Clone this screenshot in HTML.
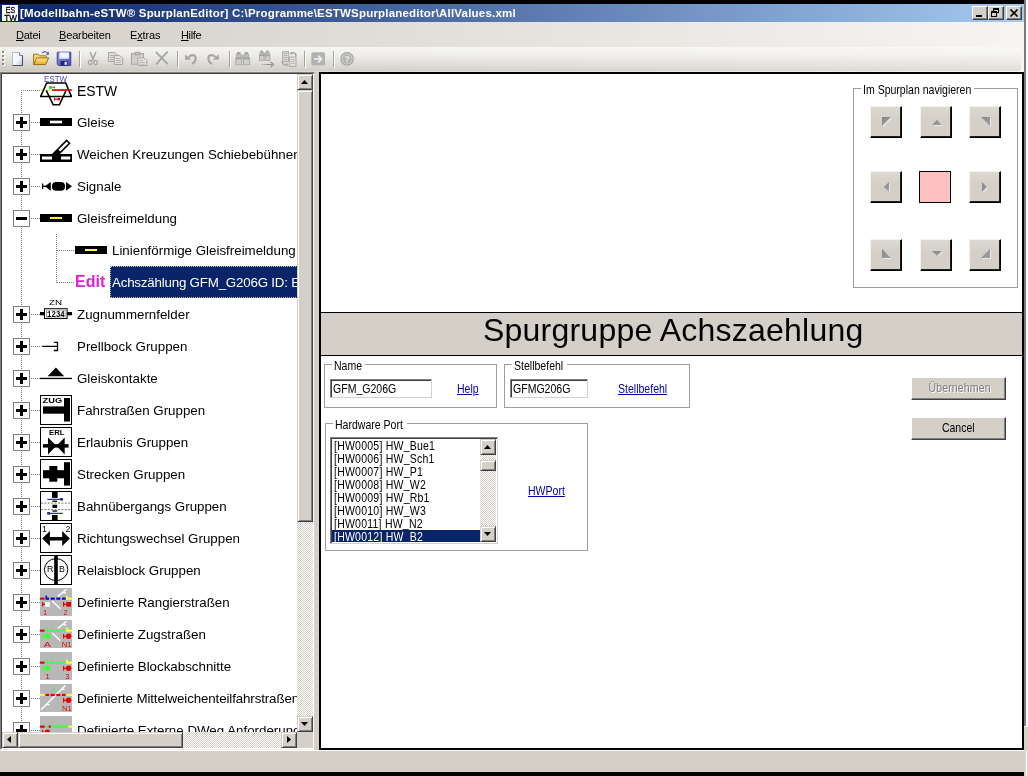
<!DOCTYPE html>
<html lang="de">
<head>
<meta charset="utf-8">
<title>[Modellbahn-eSTW® SpurplanEditor]</title>
<style>
html,body{margin:0;padding:0;}
body{width:1028px;height:776px;background:#000;overflow:hidden;position:relative;font-family:"Liberation Sans",sans-serif;font-size:11px;color:#000;}
.abs{position:absolute;}
#win{will-change:transform;position:absolute;left:0;top:4px;width:1024px;height:768px;background:#d4d0c8;overflow:hidden;}
#edgeR{position:absolute;left:1024px;top:0;width:2px;height:776px;background:#7b7b7b;}
#edgeR2{position:absolute;left:1026px;top:0;width:2px;height:776px;background:#fff;}
/* title bar */
#title{position:absolute;left:0;top:0;width:1024px;height:18px;background:linear-gradient(90deg,#0a246a 0%,#a6caf0 100%);}
#title .txt{position:absolute;left:20px;top:1px;font-weight:bold;font-size:11.5px;line-height:16px;color:#fff;white-space:pre;letter-spacing:0.2px;}
.cap{position:absolute;top:2px;width:16px;height:14px;background:#d4d0c8;box-sizing:border-box;border:1px solid;border-color:#fff #404040 #404040 #fff;box-shadow:inset -1px -1px 0 #808080;}
/* menu */
#menu{position:absolute;left:0;top:18px;width:1024px;height:25px;background:linear-gradient(90deg,#d4d0c8 0%,#f6f5f2 100%);}
#menu span{position:absolute;top:7px;line-height:13px;font-size:11px;white-space:pre;}
#menu u{text-decoration:underline;}
/* toolbar */
#tbwrap{position:absolute;left:0;top:43px;width:1024px;height:25px;background:linear-gradient(90deg,#d4d0c8 0%,#f6f5f2 100%);}
#tb{position:absolute;left:0;top:0;width:1021px;height:24px;border-radius:0 3px 3px 0;background:linear-gradient(180deg,rgba(255,255,255,.8) 0%,rgba(255,255,255,.62) 35%,rgba(255,255,255,.1) 90%,rgba(255,255,255,0) 100%),linear-gradient(90deg,#cbc7be 0%,#d4d1c9 40%,#e1ded7 100%);}
.sep{position:absolute;top:4px;width:1px;height:16px;background:#a5a299;box-shadow:1px 1px 0 #fff;}
.ico{position:absolute;top:46px;width:16px;height:16px;}
/* tree */
#tree{position:absolute;left:0;top:68px;width:315px;height:678px;box-sizing:border-box;border:1px solid;border-color:#808080 #d4d0c8 #f0eee9 #808080;background:#fff;}
#treein{position:absolute;left:0;top:0;width:313px;height:676px;box-sizing:border-box;border:1px solid;border-color:#404040 #fff #fff #404040;overflow:hidden;}
#tv{position:absolute;left:0;top:0;width:295px;height:658px;overflow:hidden;background:#fff;font-size:13.33px;}
.row{position:absolute;left:0;height:32px;width:600px;}
.row .t{position:absolute;top:1px;line-height:32px;white-space:pre;font-size:13.33px;}
.hl{position:absolute;height:1px;background-image:linear-gradient(90deg,#808080 50%,transparent 50%);background-size:2px 1px;}
.vl{position:absolute;width:1px;background-image:linear-gradient(180deg,#808080 50%,transparent 50%);background-size:1px 2px;}
.pm{position:absolute;left:12px;top:8px;width:17px;height:17px;box-sizing:border-box;border:1px solid #808080;background:#fff;}
.pm:before{content:"";position:absolute;left:2px;top:6px;width:11px;height:3px;background:#000;}
.pm.plus:after{content:"";position:absolute;left:6px;top:2px;width:3px;height:11px;background:#000;}
.ti{position:absolute;top:0;width:32px;height:32px;}
/* scrollbars */
.sbtrack{position:absolute;background-color:#fff;background-image:linear-gradient(45deg,#d4d0c8 25%,transparent 25%,transparent 75%,#d4d0c8 75%),linear-gradient(45deg,#d4d0c8 25%,transparent 25%,transparent 75%,#d4d0c8 75%);background-size:2px 2px;background-position:0 0,1px 1px;}
.sbb{position:absolute;box-sizing:border-box;background:#d4d0c8;border:1px solid;border-color:#d4d0c8 #404040 #404040 #d4d0c8;box-shadow:inset 1px 1px 0 #fff,inset -1px -1px 0 #808080;}
.arr{position:absolute;background:#000;}
.au{left:3px;top:5px;width:7px;height:4px;clip-path:polygon(0 100%,50% 0,100% 100%);}
.ad{left:3px;top:5px;width:7px;height:4px;clip-path:polygon(0 0,100% 0,50% 100%);}
.al{left:4px;top:3px;width:4px;height:7px;clip-path:polygon(100% 0,100% 100%,0 50%);}
.ar{left:5px;top:3px;width:4px;height:7px;clip-path:polygon(0 0,100% 50%,0 100%);}
/* right */
#right{position:absolute;left:319px;top:68px;width:705px;height:678px;box-sizing:border-box;border:2px solid #000;background:#fff;overflow:hidden;}
#banner{position:absolute;left:0;top:238px;width:701px;height:44px;box-sizing:border-box;border-top:1px solid #000;border-bottom:1px solid #000;background:#d4d0c8;}
#banner .t{position:absolute;left:162px;top:-1px;font-size:32px;line-height:36px;white-space:pre;letter-spacing:0.22px;}
.gb{position:absolute;box-sizing:border-box;border:1px solid #9d9d9d;}
.gb .lbl{position:absolute;top:-5px;background:#fff;padding:0 4px 0 2px;line-height:13px;height:10px;white-space:pre;}
.ms{display:inline-block;font-size:12.4px;transform:scaleX(.85);transform-origin:0 50%;white-space:pre;}
.inp{position:absolute;box-sizing:border-box;height:19px;background:#fff;border:1px solid;border-color:#808080 #d4d0c8 #d4d0c8 #808080;box-shadow:inset 1px 1px 0 #404040;}
.inp .ms{position:absolute;left:2px;top:2px;line-height:14px;}
.lnk{position:absolute;color:#0000a8;line-height:14px;}
.lnk .ms{text-decoration:underline;}
.btn{position:absolute;box-sizing:border-box;background:#d4d0c8;border:1px solid;border-color:#fff #404040 #404040 #fff;box-shadow:inset -1px -1px 0 #808080;text-align:center;}
.nb{position:absolute;width:32px;height:32px;box-sizing:border-box;background:linear-gradient(180deg,#dcd9d2 0%,#d4d0c8 40%);border:1px solid;border-color:#f4f3f0 #000 #000 #f4f3f0;box-shadow:inset -1px -1px 0 #202020;}
.li{position:relative;height:13px;padding-left:2px;width:148px;box-sizing:border-box;white-space:pre;}
.li .ms{line-height:13px;vertical-align:top;position:relative;top:1px;}
.us{font-style:normal;position:relative;top:-1.5px;}
.li .ms{letter-spacing:.25px;}
.li.sel{background:#0a246a;color:#fff;}
#status{position:absolute;left:0;top:746px;width:1024px;height:22px;background:#d4d0c8;border-top:1px solid #fff;box-sizing:border-box;}
</style>
</head>
<body>
<div id="win">
  <div id="title">
    <svg class="abs" style="left:2px;top:1px" width="16" height="16" viewBox="0 0 16 16"><rect width="16" height="16" fill="#fff"/><text x="8.4" y="7.7" font-family="Liberation Sans, sans-serif" font-size="9" text-anchor="middle" fill="#000" stroke="#000" stroke-width="0.3" textLength="9.4" lengthAdjust="spacingAndGlyphs">ES</text><text x="8.6" y="16.1" font-family="Liberation Sans, sans-serif" font-size="9" text-anchor="middle" fill="#000" stroke="#000" stroke-width="0.3" textLength="12.6" lengthAdjust="spacingAndGlyphs">TW</text></svg>
    <div class="txt">[Modellbahn-eSTW® SpurplanEditor] C:\Programme\ESTWSpurplaneditor\AllValues.xml</div>
    <div class="cap" style="left:972px"><div class="abs" style="left:3px;top:8px;width:6px;height:2px;background:#000"></div></div>
    <div class="cap" style="left:988px"><svg class="abs" style="left:0;top:0" width="12" height="12" viewBox="0 0 12 12" shape-rendering="crispEdges"><path d="M4 1h6v2h-6zM4 3h1v1h-1zM9 3h1v3h-1zM8 5h1v1h-1zM2 4h6v2h-6zM2 6h1v4h-1zM7 6h1v4h-1zM2 9h6v1h-6z" fill="#000"/></svg></div>
    <div class="cap" style="left:1006px"><svg class="abs" style="left:2px;top:1px" width="10" height="10" viewBox="0 0 10 10"><path d="M1.5 1.5L8.5 8.5M8.5 1.5L1.5 8.5" stroke="#000" stroke-width="1.7" fill="none"/></svg></div>
  </div>
  <div id="menu">
    <span style="left:16px;letter-spacing:-0.25px"><u>D</u>atei</span>
    <span style="left:59px;letter-spacing:-0.15px"><u>B</u>earbeiten</span>
    <span style="left:130px;letter-spacing:-0.15px">E<u>x</u>tras</span>
    <span style="left:181px;letter-spacing:-0.35px"><u>H</u>ilfe</span>
  </div>
  <div id="tbwrap"><div id="tb">
    <div class="abs" style="left:3px;top:5px;width:2px;height:16px;background-image:linear-gradient(180deg,#fff 50%,transparent 50%);background-size:2px 4px;"></div><div class="abs" style="left:2px;top:4px;width:2px;height:16px;background-image:linear-gradient(180deg,#8d8a82 50%,transparent 50%);background-size:2px 4px;"></div>
    <div class="sep" style="left:79px"></div>
    <div class="sep" style="left:177px"></div>
    <div class="sep" style="left:229px"></div>
    <div class="sep" style="left:304px"></div>
    <div class="sep" style="left:333px"></div>
  </div></div>
  <!--ICONS-->
  <svg class="abs" width="0" height="0"><defs>
<linearGradient id="pg" x1="0" y1="0" x2="1" y2="1"><stop offset="0" stop-color="#ffffff"/><stop offset="0.55" stop-color="#f4f6fb"/><stop offset="1" stop-color="#b8c4dc"/></linearGradient>
<linearGradient id="fo" x1="0" y1="0" x2="0" y2="1"><stop offset="0" stop-color="#ffe89a"/><stop offset="1" stop-color="#e8a818"/></linearGradient>
<linearGradient id="fl" x1="0" y1="0" x2="1" y2="1"><stop offset="0" stop-color="#8a8ee6"/><stop offset="1" stop-color="#4a4eb4"/></linearGradient>
</defs></svg>
  <svg class="abs" style="left:10px;top:47px" width="16" height="16" viewBox="0 0 16 16"><path d="M2.5 1.5h7l3 3v10h-10z" fill="url(#pg)" stroke="#b4bacc" stroke-width="1"/><path d="M9.5 1.5v3h3" fill="#e8ecf6" stroke="#7d8498" stroke-width="1"/><path d="M2.6 14.5h10M12.5 4.6v10" stroke="#4c5468" stroke-width="1.1" fill="none"/></svg>
  <svg class="abs" style="left:33px;top:47px" width="16" height="16" viewBox="0 0 16 16"><path d="M0.6 13.6V3.2h4.6l1.4 1.6h6.6v2" fill="#f6d878" stroke="#a07818" stroke-width="1"/><path d="M0.6 13.6L3.6 6.9h12L12.6 13.6z" fill="url(#fo)" stroke="#9a6c10" stroke-width="1"/><path d="M9.2 2.2c1.6-2.2 4.6-2 5.8 .4" fill="none" stroke="#4a5a9a" stroke-width="1.1"/><path d="M15.8 .6v3.2h-3z" fill="#4a5a9a"/></svg>
  <svg class="abs" style="left:56px;top:47px" width="16" height="16" viewBox="0 0 16 16"><path d="M1.2 1.2h13.6v13.4H2.6L1.2 13.2z" fill="url(#fl)" stroke="#30348c" stroke-width="0.8"/><rect x="3.4" y="1.4" width="9.6" height="6.6" fill="#f4f6ff"/><rect x="3.4" y="6.6" width="9.6" height="1.4" fill="#c8d0f0"/><rect x="4.6" y="10" width="7" height="4.6" fill="#24286c"/><rect x="8.6" y="10.8" width="2.2" height="3" fill="#e8ecff"/></svg>
  <svg class="abs" style="left:85px;top:47px" width="16" height="16" viewBox="0 0 16 16"><path d="M5 1l3.6 8.4M11 1L7.2 9.4" stroke="#a6a6a6" stroke-width="1.5" fill="none"/><ellipse cx="5.2" cy="11.6" rx="1.7" ry="2.1" fill="#e4e2de" stroke="#a6a6a6" stroke-width="1.3"/><ellipse cx="10.6" cy="11.6" rx="1.7" ry="2.1" fill="#e4e2de" stroke="#a6a6a6" stroke-width="1.3"/></svg>
  <svg class="abs" style="left:108px;top:47px" width="16" height="16" viewBox="0 0 16 16"><path d="M0.5 1.5h6l3 2.6v6.4h-9z" fill="#dedcd8" stroke="#a6a6a6" stroke-width="1"/><path d="M2 4.5h4M2 6.5h5.5M2 8.5h5.5" stroke="#a6a6a6" stroke-width="0.8"/><path d="M6.3 4.5h5.4l3 2.6v6.4H6.3z" fill="#e4e2de" stroke="#a6a6a6" stroke-width="1"/><path d="M8 7.5h3.5M8 9.5h5M8 11.5h5" stroke="#a6a6a6" stroke-width="0.8"/></svg>
  <svg class="abs" style="left:131px;top:47px" width="17" height="16" viewBox="0 0 17 16"><rect x="0.5" y="2.6" width="12" height="10.6" fill="#d2d0cc" stroke="#a6a6a6" stroke-width="1"/><rect x="4" y="1.2" width="5" height="2.8" fill="#c0beba" stroke="#a6a6a6" stroke-width="0.9"/><path d="M6.8 6.9h6l3 2.4v5.2h-9z" fill="#e6e4e0" stroke="#a6a6a6" stroke-width="1"/><path d="M8.4 9.5h4M8.4 11.4h5.6M8.4 13.2h5.6" stroke="#a6a6a6" stroke-width="0.7"/></svg>
  <svg class="abs" style="left:154px;top:47px" width="16" height="16" viewBox="0 0 16 16"><path d="M2.4 1.6C6 5 9.5 9 13.2 12.6M13.2 1.2C9.4 5 6 8.6 2.8 12.8" stroke="#a6a6a6" stroke-width="1.9" fill="none" stroke-linecap="round"/></svg>
  <svg class="abs" style="left:183px;top:47px" width="16" height="16" viewBox="0 0 16 16"><path d="M2.2 3.2v5.6h5.8z" fill="#a6a6a6"/><path d="M5.6 6.4c2.2-3.6 7-2.6 7 .8c0 2.6-1.4 4.6-3.6 5.6" fill="none" stroke="#a6a6a6" stroke-width="2.2"/></svg>
  <svg class="abs" style="left:206px;top:47px" width="16" height="16" viewBox="0 0 16 16"><path d="M12.8 3.2v5.6H7z" fill="#a6a6a6"/><path d="M9.4 6.4c-2.2-3.6-7-2.6-7 .8c0 2.6 1.4 4.6 3.6 5.6" fill="none" stroke="#a6a6a6" stroke-width="2.2"/></svg>
  <svg class="abs" style="left:235px;top:47px" width="16" height="16" viewBox="0 0 16 16"><rect x="2.0" y="1.0" width="3.4" height="2.2" fill="#a6a6a6" /><rect x="1.4" y="3.2" width="4.6" height="3.2" fill="#c2c0bc" stroke="#a6a6a6" stroke-width="0.8"/><rect x="0.8" y="6.8" width="6.0" height="7.0" fill="#d0cecA" stroke="#a6a6a6" stroke-width="0.9"/><rect x="0.8" y="6.8" width="6.0" height="1.6" fill="#a6a6a6" /><rect x="9.6" y="1.0" width="3.4" height="2.2" fill="#a6a6a6" /><rect x="9.0" y="3.2" width="4.6" height="3.2" fill="#c2c0bc" stroke="#a6a6a6" stroke-width="0.8"/><rect x="8.4" y="6.8" width="6.0" height="7.0" fill="#d0cecA" stroke="#a6a6a6" stroke-width="0.9"/><rect x="8.4" y="6.8" width="6.0" height="1.6" fill="#a6a6a6" /><rect x="6.8" y="4.0" width="1.6" height="3.6" fill="#a6a6a6" /></svg>
  <svg class="abs" style="left:258px;top:46px" width="17" height="18" viewBox="0 0 17 18"><rect x="2.4" y="0.6" width="2.6" height="1.7" fill="#a6a6a6" /><rect x="2.0" y="2.3" width="3.5" height="2.4" fill="#c2c0bc" stroke="#a6a6a6" stroke-width="0.8"/><rect x="1.5" y="5.0" width="4.6" height="5.3" fill="#d0cecA" stroke="#a6a6a6" stroke-width="0.9"/><rect x="1.5" y="5.0" width="4.6" height="1.2" fill="#a6a6a6" /><rect x="8.2" y="0.6" width="2.6" height="1.7" fill="#a6a6a6" /><rect x="7.7" y="2.3" width="3.5" height="2.4" fill="#c2c0bc" stroke="#a6a6a6" stroke-width="0.8"/><rect x="7.3" y="5.0" width="4.6" height="5.3" fill="#d0cecA" stroke="#a6a6a6" stroke-width="0.9"/><rect x="7.3" y="5.0" width="4.6" height="1.2" fill="#a6a6a6" /><rect x="6.1" y="2.9" width="1.2" height="2.7" fill="#a6a6a6" /><path d="M4 14.5h1M6 14.5h1M8 14.5h6" stroke="#8e8e8e" stroke-width="1"/><path d="M12.6 11.8l3 2.7l-3 2.7" fill="none" stroke="#8e8e8e" stroke-width="1.1"/></svg>
  <svg class="abs" style="left:281px;top:47px" width="17" height="16" viewBox="0 0 17 16"><path d="M1.6 .6h6v10h-6z" fill="#dcdad6" stroke="#a6a6a6" stroke-width="0.9"/><path d="M2.6 2.5h4M2.6 4.5h4M2.6 6.5h4M2.6 8.5h4" stroke="#a6a6a6" stroke-width="0.7"/><path d="M8.6 6h6.4v9.4H8.6z" fill="#e2e0dc" stroke="#a6a6a6" stroke-width="0.9"/><path d="M9.8 8.5h4M9.8 10.5h4M9.8 12.5h4" stroke="#a6a6a6" stroke-width="0.7"/><path d="M10 3c2.6-2.6 5.4-.6 5 2.6" fill="none" stroke="#a6a6a6" stroke-width="1.6"/><path d="M9 1l3 .6l-2 2.6z" fill="#a6a6a6"/><path d="M6.6 13c-2.8 2-5.6 0-5.4-3" fill="none" stroke="#a6a6a6" stroke-width="1.6"/><path d="M7.6 15l-3-.4l1.8-2.6z" fill="#a6a6a6"/></svg>
  <svg class="abs" style="left:310px;top:47px" width="16" height="16" viewBox="0 0 16 16"><rect x="1.3" y="1.3" width="13.7" height="13.2" rx="1.6" fill="#b2b2b2"/><path d="M4 8h7M8.2 4.6l3.4 3.4l-3.4 3.4" fill="none" stroke="#f2f2f2" stroke-width="1.7"/></svg>
  <svg class="abs" style="left:339px;top:47px" width="16" height="16" viewBox="0 0 16 16"><circle cx="8.1" cy="7.9" r="6.2" fill="#d6d4d0" stroke="#a6a6a6" stroke-width="1.2"/><circle cx="8.1" cy="7.9" r="4.6" fill="#b4b4b4"/><text x="8.1" y="11" font-family="Liberation Sans, sans-serif" font-size="8.6" font-weight="bold" fill="#f0f0f0" text-anchor="middle">?</text></svg>
  <!--/ICONS-->
  <div id="tree"><div id="treein">
    <div id="tv">
      <!--TREE-->
      <div class="vl" style="left:19px;top:16px;height:642px"></div>
      <div class="vl" style="left:54px;top:160px;height:49px"></div>
      <div class="row" style="top:0px"><div class="hl" style="left:19px;top:16px;width:19px"></div><svg class="ti" style="left:38px"  width="32" height="32" viewBox="0 0 32 32"><text textLength="23" lengthAdjust="spacingAndGlyphs" x="15.6" y="7.7" font-family="Liberation Sans, sans-serif" font-size="8.8" font-weight="normal" fill="#4a4ab8" text-anchor="middle">ESTW</text><rect x="0" y="15.2" width="11.6" height="1.6" fill="#f2f27a"/><path d="M6.7 9L0.6 22.5h30.8L25.7 9z" fill="none" stroke="#000" stroke-width="1.6"/><path d="M6.2 16.4L13.2 30.8h6.2L25.8 17" fill="none" stroke="#000" stroke-width="1.6" stroke-linejoin="miter"/><rect x="12" y="15.2" width="19.8" height="1.7" fill="#d80000"/><rect x="9" y="12.2" width="3" height="2.6" fill="#28d028"/><path d="M12.2 13.4h2.2M14.4 12.4v2" stroke="#d80000" stroke-width="0.8" fill="none"/><path d="M14.5 23.8v2.8M14.5 25.2h3" stroke="#d80000" stroke-width="1" fill="none"/><rect x="17.4" y="24" width="2.7" height="2.4" fill="#d80000"/></svg><div class="t" style="left:75px;font-size:13.9px">ESTW</div></div>
      <div class="row" style="top:32px"><div class="hl" style="left:29px;top:16px;width:9px"></div><div class="pm plus" style="left:11px"></div><svg class="ti" style="left:38px"  width="32" height="32" viewBox="0 0 32 32"><rect x="0" y="12" width="32" height="8" fill="#000"/><rect x="10" y="14.7" width="12" height="2.6" fill="#fff"/></svg><div class="t" style="left:75px">Gleise</div></div>
      <div class="row" style="top:64px"><div class="hl" style="left:29px;top:16px;width:9px"></div><div class="pm plus" style="left:11px"></div><svg class="ti" style="left:38px"  width="32" height="32" viewBox="0 0 32 32"><rect x="0" y="16" width="32" height="8" fill="#000"/><rect x="2" y="18.5" width="10" height="3" fill="#fff"/><rect x="21" y="18.5" width="9.3" height="3" fill="#fff"/><path d="M14 18L28.6 3.35" stroke="#000" stroke-width="5.7" fill="none"/><path d="M19.3 12.7L27.6 4.4" stroke="#fff" stroke-width="2.5" fill="none"/></svg><div class="t" style="left:75px">Weichen Kreuzungen Schiebebühnen</div></div>
      <div class="row" style="top:96px"><div class="hl" style="left:29px;top:16px;width:9px"></div><div class="pm plus" style="left:11px"></div><svg class="ti" style="left:38px"  width="32" height="32" viewBox="0 0 32 32"><path d="M2.6 13.5v5.6M2.6 16.3h4" stroke="#000" stroke-width="1.3" fill="none"/><path d="M4.8 16.3L10.8 12v8.7z" fill="#000"/><rect x="12" y="12" width="13" height="8.8" rx="4.2" ry="4" fill="#000"/><path d="M26 12l6 4.3l-6 4.4z" fill="#000"/></svg><div class="t" style="left:75px">Signale</div></div>
      <div class="row" style="top:128px"><div class="hl" style="left:29px;top:16px;width:9px"></div><div class="pm " style="left:11px"></div><svg class="ti" style="left:38px"  width="32" height="32" viewBox="0 0 32 32"><rect x="0" y="12" width="32" height="8" fill="#000"/><rect x="10" y="15" width="12" height="2" fill="#ffff3c"/></svg><div class="t" style="left:75px">Gleisfreimeldung</div></div>
      <div class="row" style="top:160px"><div class="hl" style="left:55px;top:16px;width:18px"></div><svg class="ti" style="left:73px"  width="32" height="32" viewBox="0 0 32 32"><rect x="0" y="12" width="32" height="8" fill="#000"/><rect x="10" y="15" width="12" height="2" fill="#ffff3c"/></svg><div class="t" style="left:110px">Linienförmige Gleisfreimeldung</div></div>
      <div class="row" style="top:192px"><div class="hl" style="left:55px;top:16px;width:18px"></div><div class="t" style="left:73px;font-weight:bold;font-size:16px;color:#e41ed8;letter-spacing:0;top:0">Edit</div><div class="abs" style="left:108px;top:0;width:260px;height:32px;background:#0a246a;box-sizing:border-box;border:1px dotted #c8c8a0"></div><div class="t" style="left:110px;color:#fff;letter-spacing:-0.2px">Achszählung GFM_G206G ID: E001</div></div>
      <div class="row" style="top:224px"><div class="hl" style="left:29px;top:16px;width:9px"></div><div class="pm plus" style="left:11px"></div><svg class="ti" style="left:38px"  width="32" height="32" viewBox="0 0 32 32"><text textLength="13" lengthAdjust="spacingAndGlyphs" x="15.6" y="7" font-family="Liberation Sans, sans-serif" font-size="6.8" font-weight="normal" fill="#000" text-anchor="middle">ZN</text><rect x="0" y="14" width="5" height="3.3" fill="#000"/><rect x="27" y="14" width="5" height="3.3" fill="#000"/><rect x="4.5" y="10.7" width="22.6" height="9.8" fill="#fff" stroke="#000" stroke-width="1"/><rect x="6.5" y="12.2" width="18.6" height="6.8" fill="none" stroke="#9a9a9a" stroke-width="0.8"/><text x="15.9" y="18.6" font-family="Liberation Mono, monospace" font-size="8.6" font-weight="bold" fill="#000" text-anchor="middle" textLength="17.6" lengthAdjust="spacingAndGlyphs">1234</text></svg><div class="t" style="left:75px">Zugnummernfelder</div></div>
      <div class="row" style="top:256px"><div class="hl" style="left:29px;top:16px;width:9px"></div><div class="pm plus" style="left:11px"></div><svg class="ti" style="left:38px"  width="32" height="32" viewBox="0 0 32 32"><path d="M2.2 16.3h15.3M13.8 12.3h3.7v8.2h-3.7" stroke="#000" stroke-width="1.3" fill="none"/></svg><div class="t" style="left:75px">Prellbock Gruppen</div></div>
      <div class="row" style="top:288px"><div class="hl" style="left:29px;top:16px;width:9px"></div><div class="pm plus" style="left:11px"></div><svg class="ti" style="left:38px"  width="32" height="32" viewBox="0 0 32 32"><rect x="0" y="15.8" width="32" height="1.3" fill="#000"/><path d="M15.9 5.5L7.6 14.3h16.6z" fill="#000"/></svg><div class="t" style="left:75px">Gleiskontakte</div></div>
      <div class="row" style="top:320px"><div class="hl" style="left:29px;top:16px;width:9px"></div><div class="pm plus" style="left:11px"></div><svg class="ti" style="left:38px"  width="32" height="32" viewBox="0 0 32 32"><rect x="0.5" y="1.5" width="31" height="29" fill="#fff" stroke="#000" stroke-width="1"/><text textLength="19.5" lengthAdjust="spacingAndGlyphs" x="2.6" y="9.4" font-family="Liberation Sans, sans-serif" font-size="7.2" font-weight="bold" fill="#000" text-anchor="start">ZUG</text><rect x="3" y="12.4" width="22" height="7.3" fill="#000"/><rect x="24" y="4" width="6" height="23.5" fill="#000"/></svg><div class="t" style="left:75px">Fahrstraßen Gruppen</div></div>
      <div class="row" style="top:352px"><div class="hl" style="left:29px;top:16px;width:9px"></div><div class="pm plus" style="left:11px"></div><svg class="ti" style="left:38px"  width="32" height="32" viewBox="0 0 32 32"><rect x="0.5" y="1.5" width="31" height="29" fill="#fff" stroke="#000" stroke-width="1"/><text textLength="15.5" lengthAdjust="spacingAndGlyphs" x="16.8" y="9.4" font-family="Liberation Sans, sans-serif" font-size="7.2" font-weight="bold" fill="#000" text-anchor="middle">ERL</text><rect x="3" y="18.1" width="25.6" height="3.5" fill="#000"/><path d="M8 11.4L16.4 19.8L8 28.4zM24.7 11.4L16.4 19.8L24.7 28.4z" fill="#000"/></svg><div class="t" style="left:75px">Erlaubnis Gruppen</div></div>
      <div class="row" style="top:384px"><div class="hl" style="left:29px;top:16px;width:9px"></div><div class="pm plus" style="left:11px"></div><svg class="ti" style="left:38px"  width="32" height="32" viewBox="0 0 32 32"><rect x="0.5" y="1.5" width="31" height="29" fill="#fff" stroke="#000" stroke-width="1"/><rect x="24" y="4.2" width="6" height="23.4" fill="#000"/><rect x="3" y="12.2" width="22" height="8.1" fill="#000"/><rect x="9.3" y="8" width="8" height="15.7" fill="#000"/></svg><div class="t" style="left:75px">Strecken Gruppen</div></div>
      <div class="row" style="top:416px"><div class="hl" style="left:29px;top:16px;width:9px"></div><div class="pm plus" style="left:11px"></div><svg class="ti" style="left:38px"  width="32" height="32" viewBox="0 0 32 32"><rect x="0.5" y="1.5" width="31" height="29" fill="#fff" stroke="#000" stroke-width="1"/><rect x="12" y="1.5" width="5.6" height="6.4" fill="#000"/><rect x="12" y="25" width="5.6" height="5.5" fill="#000"/><rect x="12.4" y="10.6" width="4.8" height="1.3" fill="#000"/><rect x="12.4" y="14.7" width="4.8" height="3.2" fill="#000"/><rect x="12.4" y="20.4" width="4.8" height="1.3" fill="#000"/><path d="M1 13.1h30M1 19.6h30" stroke="#78748c" stroke-width="1" stroke-dasharray="2 1.4" fill="none"/><rect x="7.3" y="8.8" width="15" height="1.1" fill="#1818c0"/><rect x="20.2" y="8.1" width="2.7" height="2.5" fill="#1818c0"/><rect x="7.3" y="22.8" width="15.5" height="1.1" fill="#1818c0"/><rect x="7.3" y="22.1" width="2.7" height="2.5" fill="#1818c0"/></svg><div class="t" style="left:75px">Bahnübergangs Gruppen</div></div>
      <div class="row" style="top:448px"><div class="hl" style="left:29px;top:16px;width:9px"></div><div class="pm plus" style="left:11px"></div><svg class="ti" style="left:38px"  width="32" height="32" viewBox="0 0 32 32"><rect x="0.5" y="1.5" width="31" height="29" fill="#fff" stroke="#000" stroke-width="1"/><text x="2.0" y="9.5" font-family="Liberation Sans, sans-serif" font-size="8.6" font-weight="normal" fill="#000" text-anchor="start">1</text><text x="25.4" y="9.5" font-family="Liberation Sans, sans-serif" font-size="8.6" font-weight="normal" fill="#000" text-anchor="start">2</text><path d="M2.2 16.6L9.9 9.1V14.9H22.2V9.1L29.9 16.6L22.2 23.9V18.4H9.9V23.9z" fill="#000"/></svg><div class="t" style="left:75px">Richtungswechsel Gruppen</div></div>
      <div class="row" style="top:480px"><div class="hl" style="left:29px;top:16px;width:9px"></div><div class="pm plus" style="left:11px"></div><svg class="ti" style="left:38px"  width="32" height="32" viewBox="0 0 32 32"><rect x="0.5" y="1.5" width="31" height="29" fill="#fff" stroke="#000" stroke-width="1"/><ellipse cx="16.1" cy="15.6" rx="11.7" ry="11" fill="none" stroke="#000" stroke-width="1"/><rect x="14.2" y="1.5" width="3.6" height="29" fill="#000"/><text x="6.9" y="17.9" font-family="Liberation Sans, sans-serif" font-size="8.8" font-weight="normal" fill="#000" text-anchor="start">R</text><text x="19" y="17.9" font-family="Liberation Sans, sans-serif" font-size="8.8" font-weight="normal" fill="#000" text-anchor="start">B</text></svg><div class="t" style="left:75px">Relaisblock Gruppen</div></div>
      <div class="row" style="top:512px"><div class="hl" style="left:29px;top:16px;width:9px"></div><div class="pm plus" style="left:11px"></div><svg class="ti" style="left:38px"  width="32" height="32" viewBox="0 0 32 32"><rect x="0" y="2" width="32" height="28" fill="#b8b8b8"/><rect x="0" y="11.6" width="4.6" height="2.1" fill="#e60000"/><rect x="5.5" y="11.6" width="3.5" height="2.1" fill="#0000c8"/><rect x="10.6" y="11.6" width="4.1" height="2.1" fill="#0000c8"/><rect x="16.3" y="11.6" width="4.1" height="2.1" fill="#0000c8"/><rect x="22" y="11.6" width="3.8" height="2.1" fill="#0000c8"/><rect x="25.8" y="11.6" width="6.2" height="2.1" fill="#ffff3c"/><rect x="5.5" y="9.6" width="1.6" height="2" fill="#0000c8"/><rect x="26" y="9.6" width="1.8" height="2" fill="#ffff3c"/><path d="M17.8 10.4L26.6 3.2M23.5 6.3l2.6 .8M12.2 15.1L20.4 22.8" stroke="#fff" stroke-width="1.4" fill="none"/><path d="M2.6 16v4.6M2.6 18.3h3" stroke="#e60000" stroke-width="1.2" fill="none"/><rect x="5" y="16" width="4.7" height="4.7" fill="#fff"/><path d="M23.6 16v4.6M23.6 18.3h3" stroke="#e60000" stroke-width="1.2" fill="none"/><rect x="26.3" y="16" width="4.7" height="4.7" fill="#e60000"/><text x="3" y="28.8" font-family="Liberation Sans, sans-serif" font-size="7.5" font-weight="normal" fill="#e60000" text-anchor="start">1</text><text x="23.6" y="28.8" font-family="Liberation Sans, sans-serif" font-size="7.5" font-weight="normal" fill="#e60000" text-anchor="start">2</text></svg><div class="t" style="left:75px">Definierte Rangierstraßen</div></div>
      <div class="row" style="top:544px"><div class="hl" style="left:29px;top:16px;width:9px"></div><div class="pm plus" style="left:11px"></div><svg class="ti" style="left:38px"  width="32" height="32" viewBox="0 0 32 32"><rect x="0" y="2" width="32" height="28" fill="#b8b8b8"/><rect x="0" y="11.6" width="4.6" height="2.1" fill="#e60000"/><rect x="5.5" y="11.6" width="3.5" height="2.1" fill="#3cff3c"/><rect x="10.6" y="11.6" width="4.1" height="2.1" fill="#3cff3c"/><rect x="16.3" y="11.6" width="4.1" height="2.1" fill="#3cff3c"/><rect x="22" y="11.6" width="3.8" height="2.1" fill="#3cff3c"/><rect x="25.8" y="11.6" width="6.2" height="2.1" fill="#ffff3c"/><rect x="5.5" y="9.6" width="1.6" height="2" fill="#3cff3c"/><rect x="26" y="9.6" width="1.8" height="2" fill="#ffff3c"/><path d="M17.8 10.4L26.6 3.2M23.5 6.3l2.6 .8M12.2 15.1L20.4 22.8" stroke="#fff" stroke-width="1.4" fill="none"/><path d="M2.6 16v4.6M2.6 18.3h3" stroke="#3cff3c" stroke-width="1.2" fill="none"/><circle cx="7.6" cy="18.3" r="2.7" fill="#3cff3c"/><path d="M23.6 16v4.6M23.6 18.3h3" stroke="#e60000" stroke-width="1.2" fill="none"/><circle cx="28.6" cy="18.3" r="2.7" fill="#e60000"/><text textLength="7.2" lengthAdjust="spacingAndGlyphs" x="3.8" y="28.8" font-family="Liberation Sans, sans-serif" font-size="8" font-weight="normal" fill="#e60000" text-anchor="start">A</text><text x="21.8" y="28.8" font-family="Liberation Sans, sans-serif" font-size="7.6" font-weight="normal" fill="#e60000" text-anchor="start">N1</text></svg><div class="t" style="left:75px">Definierte Zugstraßen</div></div>
      <div class="row" style="top:576px"><div class="hl" style="left:29px;top:16px;width:9px"></div><div class="pm plus" style="left:11px"></div><svg class="ti" style="left:38px"  width="32" height="32" viewBox="0 0 32 32"><rect x="0" y="2" width="32" height="28" fill="#b8b8b8"/><rect x="0" y="11.6" width="4.6" height="2.1" fill="#e60000"/><rect x="5.5" y="11.6" width="3.5" height="2.1" fill="#3cff3c"/><rect x="10.6" y="11.6" width="4.1" height="2.1" fill="#3cff3c"/><rect x="16.3" y="11.6" width="4.1" height="2.1" fill="#3cff3c"/><rect x="22" y="11.6" width="3.8" height="2.1" fill="#3cff3c"/><rect x="25.8" y="11.6" width="6.2" height="2.1" fill="#ffff3c"/><rect x="5.5" y="9.6" width="1.6" height="2" fill="#3cff3c"/><rect x="26" y="9.6" width="1.8" height="2" fill="#ffff3c"/><path d="M2.6 16v4.6M2.6 18.3h3" stroke="#3cff3c" stroke-width="1.2" fill="none"/><circle cx="7.6" cy="18.3" r="2.7" fill="#3cff3c"/><path d="M23.6 16v4.6M23.6 18.3h3" stroke="#e60000" stroke-width="1.2" fill="none"/><circle cx="28.6" cy="18.3" r="2.7" fill="#e60000"/><text x="5.4" y="28.6" font-family="Liberation Sans, sans-serif" font-size="7.5" font-weight="normal" fill="#e60000" text-anchor="start">1</text><text x="25.2" y="28.6" font-family="Liberation Sans, sans-serif" font-size="7.5" font-weight="normal" fill="#e60000" text-anchor="start">3</text></svg><div class="t" style="left:75px">Definierte Blockabschnitte</div></div>
      <div class="row" style="top:608px"><div class="hl" style="left:29px;top:16px;width:9px"></div><div class="pm plus" style="left:11px"></div><svg class="ti" style="left:38px"  width="32" height="32" viewBox="0 0 32 32"><rect x="0" y="2" width="32" height="28" fill="#b8b8b8"/><text x="11.8" y="8.6" font-family="Liberation Sans, sans-serif" font-size="7.5" font-weight="normal" fill="#3cff3c" text-anchor="start">1</text><path d="M1 27.8L25.4 3.4M6.5 22.3l3 .6M22 6.8l2.6 .8" stroke="#fff" stroke-width="1.4" fill="none"/><rect x="0" y="11.9" width="4.6" height="2.1" fill="#ffff3c"/><rect x="5.5" y="11.9" width="3.5" height="2.1" fill="#e60000"/><rect x="10.6" y="11.9" width="4.1" height="2.1" fill="#e60000"/><rect x="16.3" y="11.9" width="4.1" height="2.1" fill="#e60000"/><rect x="22" y="11.9" width="3.8" height="2.1" fill="#e60000"/><rect x="25.8" y="11.9" width="6.2" height="2.1" fill="#ffff3c"/><path d="M23.6 16v4.6M23.6 18.3h3" stroke="#e60000" stroke-width="1.2" fill="none"/><circle cx="28.6" cy="18.3" r="2.7" fill="#e60000"/><text x="22" y="28.8" font-family="Liberation Sans, sans-serif" font-size="7.6" font-weight="normal" fill="#e60000" text-anchor="start">N1</text></svg><div class="t" style="left:75px;letter-spacing:-0.12px">Definierte Mittelweichenteilfahrstraßen</div></div>
      <div class="row" style="top:640px"><div class="hl" style="left:29px;top:16px;width:9px"></div><div class="pm plus" style="left:11px"></div><svg class="ti" style="left:38px"  width="32" height="32" viewBox="0 0 32 32"><rect x="0" y="2" width="32" height="28" fill="#b8b8b8"/><rect x="0" y="11.6" width="4.8" height="2.1" fill="#e60000"/><rect x="6" y="11.6" width="2" height="2.1" fill="#3cff3c"/><rect x="8.6" y="11.6" width="2.3" height="2.1" fill="#e60000"/><rect x="12" y="11.6" width="16.3" height="2.1" fill="#3cff3c"/><rect x="17" y="9.8" width="1.8" height="2" fill="#3cff3c"/><rect x="28.3" y="11.6" width="3.7" height="2.1" fill="#ffff3c"/><path d="M2.6 16v4.6M2.6 18.3h3" stroke="#e60000" stroke-width="1.2" fill="none"/><circle cx="7.4" cy="18.3" r="2.7" fill="#e60000"/></svg><div class="t" style="left:75px">Definierte Externe DWeg Anforderungen</div></div>
      <!--/TREE-->
    </div>
    <!--SCROLL-->
    <div class="sbtrack" style="left:295px;top:0;width:16px;height:658px"></div>
    <div class="sbb" style="left:295px;top:0;width:16px;height:16px"><div class="arr au"></div></div>
    <div class="sbb" style="left:295px;top:16px;width:16px;height:432px"></div>
    <div class="sbb" style="left:295px;top:642px;width:16px;height:16px"><div class="arr ad"></div></div>
    <div class="sbtrack" style="left:0;top:658px;width:295px;height:16px"></div>
    <div class="sbb" style="left:0;top:658px;width:16px;height:16px"><div class="arr al"></div></div>
    <div class="sbb" style="left:16px;top:658px;width:165px;height:16px"></div>
    <div class="sbb" style="left:279px;top:658px;width:16px;height:16px"><div class="arr ar"></div></div>
    <div class="abs" style="left:295px;top:658px;width:16px;height:16px;background:#d4d0c8"></div>
    <!--/SCROLL-->
  </div></div>
  <div id="right">

    <div class="gb" style="left:532px;top:14px;width:165px;height:200px"><div class="lbl" style="left:7px"><span class="ms" style="margin-right:-20px">Im Spurplan navigieren</span></div></div>
    <div class="nb" style="left:549px;top:32px"><svg class="abs" style="left:10px;top:9px" width="12" height="12" viewBox="0 0 12 12"><path d="M2 2h9l-9 9z" fill="#eceae6"/><path d="M1 1h9l-9 9z" fill="url(#g1)"/></svg></div>
    <div class="nb" style="left:599px;top:32px"><svg class="abs" style="left:10px;top:10px" width="12" height="12" viewBox="0 0 12 12"><path d="M2 9h10l-5-5z" fill="#eceae6"/><path d="M1 8h10l-5-5z" fill="url(#g1)"/></svg></div>
    <div class="nb" style="left:648px;top:32px"><svg class="abs" style="left:10px;top:9px" width="12" height="12" viewBox="0 0 12 12"><path d="M2 2h9v9z" fill="#eceae6"/><path d="M1 1h9v9z" fill="url(#g1)"/></svg></div>
    <div class="nb" style="left:549px;top:97px"><svg class="abs" style="left:10px;top:9px" width="12" height="12" viewBox="0 0 12 12"><path d="M9 2v10l-5-5z" fill="#eceae6"/><path d="M8 1v10l-5-5z" fill="url(#g1)"/></svg></div>
    <div class="abs" style="left:598px;top:97px;width:32px;height:32px;box-sizing:border-box;border:1px solid #000;background:#ffc0c0"></div>
    <div class="nb" style="left:648px;top:97px"><svg class="abs" style="left:8px;top:9px" width="12" height="12" viewBox="0 0 12 12"><path d="M5 2v10l5-5z" fill="#eceae6"/><path d="M4 1v10l5-5z" fill="url(#g1)"/></svg></div>
    <div class="nb" style="left:549px;top:165px"><svg class="abs" style="left:10px;top:8px" width="12" height="12" viewBox="0 0 12 12"><path d="M2 2v9h9z" fill="#eceae6"/><path d="M1 1v9h9z" fill="url(#g1)"/></svg></div>
    <div class="nb" style="left:599px;top:165px"><svg class="abs" style="left:10px;top:7px" width="12" height="12" viewBox="0 0 12 12"><path d="M2 5h10l-5 5z" fill="#eceae6"/><path d="M1 4h10l-5 5z" fill="url(#g1)"/></svg></div>
    <div class="nb" style="left:648px;top:165px"><svg class="abs" style="left:10px;top:8px" width="12" height="12" viewBox="0 0 12 12"><path d="M11 2v9h-9z" fill="#eceae6"/><path d="M10 1v9h-9z" fill="url(#g1)"/></svg></div>
    <svg width="0" height="0" class="abs"><defs><linearGradient id="g1" x1="0" y1="0" x2="1" y2="1"><stop offset="0" stop-color="#858585"/><stop offset="1" stop-color="#a2a2a2"/></linearGradient></defs></svg>
    <div id="banner"><div class="t">Spurgruppe Achszaehlung</div></div>
    <div class="gb" style="left:3px;top:290px;width:173px;height:44px"><div class="lbl" style="left:7px"><span class="ms" style="margin-right:-6px">Name</span></div></div>
    <div class="inp" style="left:9px;top:305px;width:102px"><span class="ms">GFM<i class="us">_</i>G206G</span></div>
    <div class="lnk" style="left:136px;top:308px"><span class="ms">Help</span></div>
    <div class="gb" style="left:183px;top:290px;width:186px;height:44px"><div class="lbl" style="left:7px"><span class="ms" style="margin-right:-9px">Stellbefehl</span></div></div>
    <div class="inp" style="left:189px;top:305px;width:78px"><span class="ms">GFMG206G</span></div>
    <div class="lnk" style="left:297px;top:308px"><span class="ms">Stellbefehl</span></div>
    <div class="gb" style="left:4px;top:349px;width:263px;height:128px"><div class="lbl" style="left:7px"><span class="ms" style="margin-right:-12px">Hardware Port</span></div></div>
    <div id="lb" class="abs" style="left:9px;top:363px;width:168px;height:107px;box-sizing:border-box;border:1px solid;border-color:#808080 #d4d0c8 #d4d0c8 #808080;box-shadow:inset 1px 1px 0 #404040;background:#fff;">
      <div class="abs" style="left:1px;top:1px;width:164px;height:103px;overflow:hidden;line-height:13px">
        <div class="li"><span class="ms">[HW0005] HW<i class="us">_</i>Bue1</span></div>
        <div class="li"><span class="ms">[HW0006] HW<i class="us">_</i>Sch1</span></div>
        <div class="li"><span class="ms">[HW0007] HW<i class="us">_</i>P1</span></div>
        <div class="li"><span class="ms">[HW0008] HW<i class="us">_</i>W2</span></div>
        <div class="li"><span class="ms">[HW0009] HW<i class="us">_</i>Rb1</span></div>
        <div class="li"><span class="ms">[HW0010] HW<i class="us">_</i>W3</span></div>
        <div class="li"><span class="ms">[HW0011] HW<i class="us">_</i>N2</span></div>
        <div class="li sel"><span class="ms">[HW0012] HW<i class="us">_</i>B2</span></div>
        <div class="sbtrack" style="left:148px;top:0;width:16px;height:103px"></div>
        <div class="sbb" style="left:148px;top:0;width:16px;height:16px"><div class="arr au"></div></div>
        <div class="sbb" style="left:148px;top:21px;width:16px;height:11px"></div>
        <div class="sbb" style="left:148px;top:87px;width:16px;height:16px"><div class="arr ad"></div></div>
      </div>
    </div>
    <div class="lnk" style="left:207px;top:410px"><span class="ms">HWPort</span></div>
    <div class="btn" style="left:590px;top:303px;width:95px;height:23px;color:#808080;text-shadow:1px 1px 0 #fff;line-height:21px"><span class="ms" style="transform-origin:50% 50%;letter-spacing:.15px;position:relative;left:1px">Übernehmen</span></div>
    <div class="btn" style="left:590px;top:343px;width:95px;height:23px;line-height:21px"><span class="ms" style="transform-origin:50% 50%">Cancel</span></div>
  </div>
  <div id="status"></div>
</div>
<div id="edgeR"></div><div id="edgeR2"></div>
<div class="abs" style="left:1024px;top:726px;width:4px;height:50px;background:#d6d3cb;border-top:1px solid #fff;box-sizing:border-box"></div><div class="abs" style="left:1026px;top:751px;width:1px;height:25px;background:#fff"></div>
</body>
</html>
